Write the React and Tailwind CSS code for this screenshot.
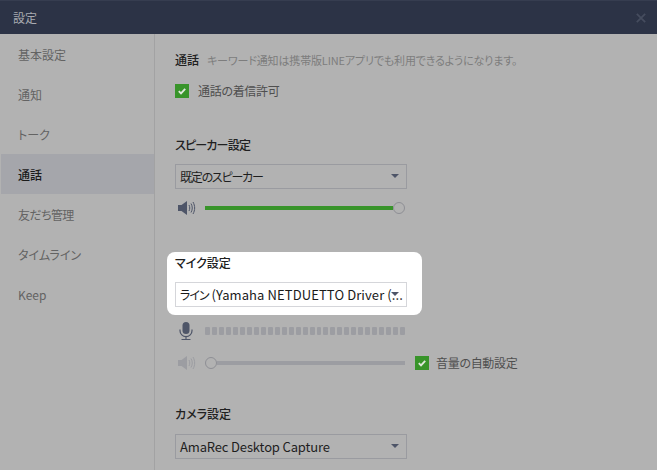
const font = { fontFamily: '"Noto Sans CJK JP", "Noto Sans", sans-serif' };

function Check() {
  return (
    <span className="flex h-[14px] w-[14px] shrink-0 items-center justify-center bg-[#38942a]">
      <svg width="10" height="10" viewBox="0 0 10 10" fill="none">
        <path d="M1.8 5.2 4 7.4 8.2 2.8" stroke="#dfe8dc" strokeWidth="1.9" />
      </svg>
    </span>
  );
}

function Speaker({ color, waves }) {
  return (
    <svg width="18" height="16" viewBox="0 0 18 16" fill="none" className="shrink-0">
      <path d="M0 5h3.5L9 1v14l-5.5-4H0z" fill={color} />
      <path d="M11 5c1 2 1 4 0 6" stroke={waves} strokeWidth="1" />
      <path d="M13 3.5c1.7 3 1.7 6 0 9" stroke={waves} strokeWidth="1" />
      <path d="M15 2c2.2 4 2.2 8 0 12" stroke={waves} strokeWidth="1" />
    </svg>
  );
}

function Mic() {
  return (
    <svg width="14" height="18" viewBox="0 0 14 18" fill="none" className="shrink-0">
      <rect x="3.5" y="0" width="7" height="12" rx="3.5" fill="#4e5568" />
      <path d="M1 7.5v1.2a6 6 0 0 0 12 0V7.5" stroke="#4e5568" strokeWidth="1.2" />
      <path d="M7 14.5V17M2.5 17.5h9" stroke="#4e5568" strokeWidth="1.1" />
    </svg>
  );
}

function Select({ children, white }) {
  return (
    <div
      className={`relative flex h-[25px] w-[232px] items-center overflow-hidden border pl-[4px] text-[13px] leading-none ${
        white ? 'border-[#d5d6da] bg-white text-[#1a1a1a]' : 'border-[#9a9ba0] text-[#1e1e1e]'
      }`}
    >
      <span className="whitespace-nowrap">{children}</span>
      <span className="absolute right-[7px] top-[9px] block h-0 w-0 border-x-[4px] border-t-[4px] border-x-transparent border-t-[#4e5568]" />
    </div>
  );
}

function Knob({ className = '' }) {
  return <span className={`block h-[12px] w-[12px] shrink-0 rounded-full border border-[#8e8f95] bg-[#b2b2b2] ${className}`} />;
}

const menu = ['基本設定', '通知', 'トーク', '通話', '友だち管理', 'タイムライン', 'Keep'];

export default function App() {
  return (
    <div style={font} className="flex h-[470px] w-[657px] flex-col overflow-hidden bg-[#b2b2b2] [font-feature-settings:'palt']">
      <header className="flex h-[34px] shrink-0 items-center justify-between border-t border-[#363d50] bg-[#2c3346] pl-[13px] pr-[11px] text-[12px] text-[#a9abb1]">
        <span>設定</span>
        <svg width="10" height="10" viewBox="0 0 10 10" fill="none">
          <path d="M.8.8l8.4 8.4M9.2.8.8 9.2" stroke="#454c5e" strokeWidth="1.8" />
        </svg>
      </header>
      <div className="flex min-h-0 flex-1">
        <nav className="w-[155px] shrink-0 border-r border-[#a2a2a3] pl-[1px]">
          {menu.map((m) => (
            <div
              key={m}
              className={`flex h-[40px] items-center pl-[17px] pt-[1px] text-[12px] ${
                m === '通話' ? 'bg-[#a5a6ab] font-medium text-[#1b1b1b]' : 'text-[#636363]'
              } ${m === '友だち管理' ? 'tracking-[-0.6px]' : ''}`}
            >
              {m}
            </div>
          ))}
        </nav>
        <main className="flex-1 pl-[20px]">
          <div className="mt-[17px] flex h-[18px] items-center text-[12px]">
            <span className="font-medium text-[#202020]">通話</span>
            <span className="ml-[8px] text-[11px] tracking-[-0.15px] text-[#7d7d7d]">キーワード通知は携帯版LINEアプリでも利用できるようになります。</span>
          </div>
          <label className="mt-[15px] flex h-[14px] items-center gap-[9px] text-[12px] tracking-[-0.3px] text-[#4f4f4f]">
            <Check />
            通話の着信許可
          </label>
          <h2 className="mt-[38px] h-[18px] text-[12px] font-medium leading-[18px] tracking-[-0.8px] text-[#202020]">スピーカー設定</h2>
          <div className="mt-[10px]">
            <Select>
              <span className="text-[12px] tracking-[-1.2px]">既定のスピーカー</span>
            </Select>
          </div>
          <div className="mt-[11px] flex h-[16px] items-center pl-[3px]">
            <Speaker color="#4e5568" waves="#4e5568" />
            <div className="ml-[9px] h-[4px] w-[188px] bg-[#38942a]" />
            <Knob />
          </div>
          <section className="mt-[36px] -ml-[8px] h-[63px] w-[255px] rounded-[8px] bg-white pl-[8px] pt-[2px]">
            <h2 className="h-[18px] text-[12px] font-medium leading-[18px] text-[#202020]">マイク設定</h2>
            <div className="mt-[10px]">
              <Select white>
                <span className="text-[12px] tracking-[-1px]">ライン</span>
                <span className="tracking-[0.1px]"> (Yamaha NETDUETTO Driver (...</span>
              </Select>
            </div>
          </section>
          <div className="mt-[7px] flex h-[18px] items-center pl-[4px]">
            <Mic />
            <div className="ml-[12px] flex w-[200px] gap-[2px]">
              {Array.from({ length: 29 }, (_, i) => (
                <span key={i} className="block h-[8px] w-[5px] rounded-[1px] bg-[#9c9da2]" />
              ))}
            </div>
          </div>
          <div className="mt-[15px] flex h-[16px] items-center pl-[3px]">
            <Speaker color="#9c9da2" waves="#9c9da2" />
            <div className="relative ml-[9px] flex w-[200px] items-center">
              <Knob />
              <div className="h-[4px] flex-1 bg-[#9c9da2]" />
            </div>
            <span className="ml-[10px]"><Check /></span>
            <span className="ml-[7px] text-[12px] tracking-[-0.3px] text-[#4f4f4f]">音量の自動設定</span>
          </div>
          <h2 className="mt-[34px] h-[18px] text-[12px] font-medium leading-[18px] text-[#202020]">カメラ設定</h2>
          <div className="mt-[11px]">
            <Select>
              <span className="tracking-[-0.15px]">AmaRec Desktop Capture</span>
            </Select>
          </div>
        </main>
      </div>
    </div>
  );
}
